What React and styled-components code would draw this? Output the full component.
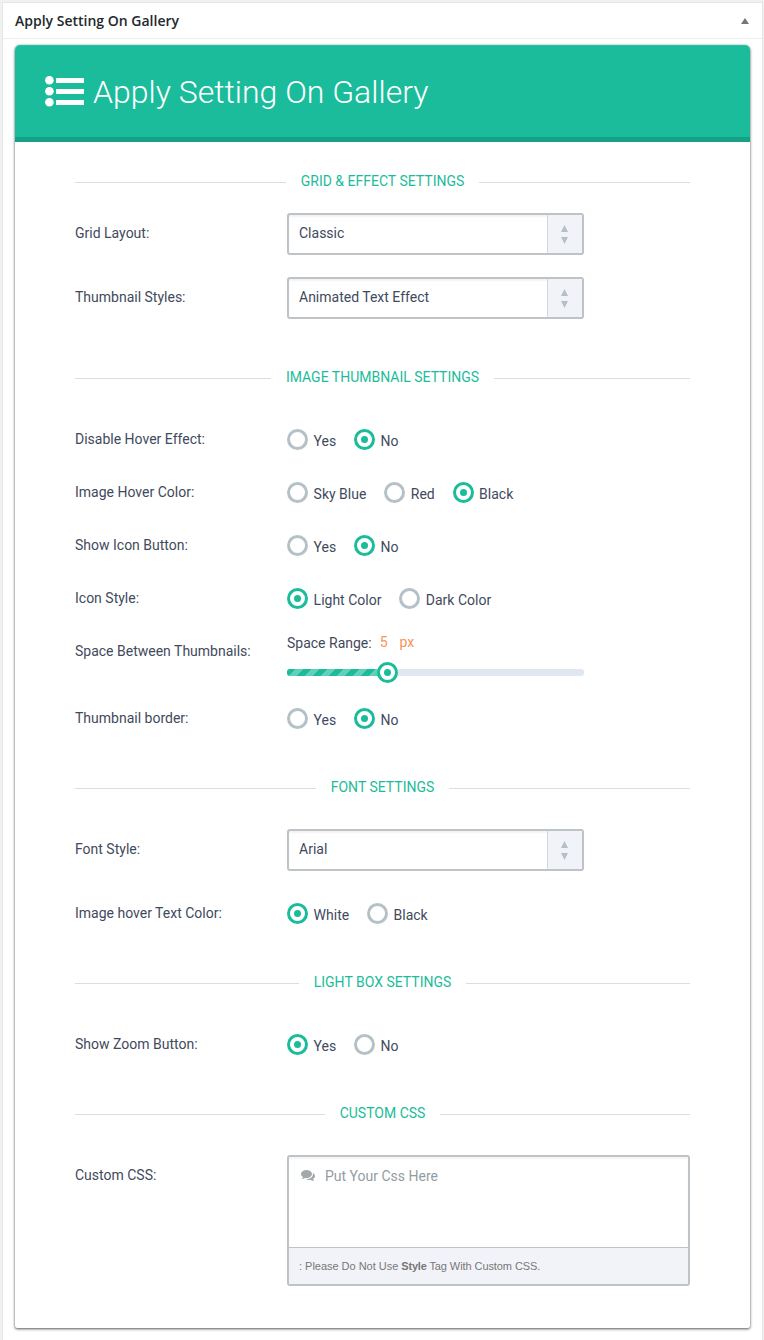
import React from "react";
import styled, { createGlobalStyle, css } from "styled-components";

const GlobalStyle = createGlobalStyle`
  *, *::before, *::after { box-sizing: border-box; }
  html, body { margin: 0; background: #f1f1f1; }
  body { font: 14px/20px Roboto, "Liberation Sans", sans-serif; color: #3f4a5c; height: 1340px; overflow: hidden; }
  input, textarea, button { font: inherit; }
`;

const MetaBox = styled.section`
  width: 761px;
  height: 1345px;
  margin: 2px 0 0 2px;
  background: #fff;
  border: 1px solid #e5e5e5;
`;

const MetaHeader = styled.header`
  height: 36px;
  display: flex;
  align-items: center;
  justify-content: space-between;
  padding: 0 13.5px 0 12px;
  border-bottom: 1px solid #eee;
`;

const MetaTitle = styled.h2`
  margin: 0;
  font: 600 14px/20px "Open Sans", "Noto Sans", sans-serif;
  color: #23282d;
`;

const Card = styled.div`
  margin: 6px 12px 0;
  width: 735px;
  border-radius: 5px 5px 2px 2px;
  background: #fff;
  box-shadow: 0 1px 3px rgba(0, 0, 0, 0.65), 0 0 1px rgba(0, 0, 0, 0.35);
`;

const Banner = styled.div`
  height: 97px;
  display: flex;
  align-items: center;
  gap: 9px;
  padding: 0 30px;
  color: #fff;
  background: #1bbc9b;
  border-top: 1px solid #1dc8a5;
  border-bottom: 5px solid #16a085;
  border-radius: 5px 5px 0 0;
`;

const BannerTitle = styled.h1`
  margin: 0;
  font-size: 32px;
  line-height: 40px;
  font-weight: 300;
`;

const Form = styled.form`
  padding: 30px 60px 42px;
`;

const Section = styled.fieldset`
  margin: 0;
  padding: 0;
  border: 0;
  min-width: 0;
  & + & { margin-top: 49px; }
`;

const SectionTitle = styled.h3`
  margin: 0 0 ${(p) => p.$space}px;
  height: 20px;
  display: flex;
  align-items: center;
  gap: 14.5px;
  font-size: 14px;
  line-height: 18px;
  font-weight: 400;
  text-transform: uppercase;
  white-space: nowrap;
  color: #1bbc9b;
  span { padding-bottom: 2px; }
  &::before, &::after {
    content: "";
    flex: 1;
    height: 1px;
    margin-top: 1px;
    background: #d9dde5;
  }
`;

const Rows = styled.div`
  display: flex;
  flex-direction: column;
  gap: ${(p) => p.$gap || 32}px;
`;

const Row = styled.div`
  display: grid;
  grid-template-columns: 212px 1fr;
  min-height: 21px;
`;

const RowLabel = styled.div`
  padding-top: ${(p) => (p.$tall ? 10 : 0)}px;
  height: 20px;
  white-space: nowrap;
`;

const SelectBox = styled.div`
  width: 297px;
  height: 42px;
  display: flex;
  border: 2px solid #bdc3c7;
  border-radius: 3px;
  box-shadow: inset 0 2px 2px #f3f3f3;
`;

const SelectValue = styled.div`
  flex: 1;
  padding: 8px 10px;
`;

const SelectArrows = styled.div`
  width: 35px;
  display: flex;
  flex-direction: column;
  align-items: center;
  padding: 10px 2px 0 0;
  gap: 5px;
  background: #f2f3f9;
  border-left: 1px solid #d3d6e2;
  color: #b4bfc8;
  svg { display: block; }
`;

const RadioGroup = styled.div`
  display: flex;
  height: 21px;
  gap: 17.8px;
`;

const RadioLabel = styled.label`
  display: flex;
  gap: 5.6px;
  white-space: nowrap;
  span { padding-top: 2px; height: 22px; }
`;

const ring = css`
  width: 21px;
  height: 21px;
  flex: none;
  display: grid;
  place-items: center;
  border: 3px solid ${(p) => (p.$on ? "#1bbc9b" : "#b5c1c7")};
  border-radius: 50%;
  background: #fff;
  &::after {
    content: "";
    width: 7px;
    height: 7px;
    border-radius: 50%;
    background: ${(p) => (p.$on ? "#1bbc9b" : "transparent")};
  }
`;

const RadioRing = styled.i`
  ${ring}
`;

const RangeField = styled.div`
  width: 297px;
  height: 43px;
  margin-top: -8px;
  display: flex;
  flex-direction: column;
  justify-content: space-between;
`;

const RangeCaption = styled.div`
  display: flex;
  height: 20px;
`;

const RangeValue = styled.span`
  margin-left: ${(p) => p.$offset}px;
  margin-top: -1px;
  color: #f6935c;
`;

const RangeTrack = styled.div`
  height: 7px;
  display: flex;
  align-items: center;
  border-radius: 3px;
  background: #e1e7f1;
`;

const RangeFill = styled.div`
  height: 7px;
  border-radius: 3px 0 0 3px;
  background-color: #1bbc9b;
  background-image: linear-gradient(
    -45deg,
    rgba(255, 255, 255, 0.3) 25%,
    transparent 25%,
    transparent 50%,
    rgba(255, 255, 255, 0.3) 50%,
    rgba(255, 255, 255, 0.3) 75%,
    transparent 75%
  );
  background-size: 16px 16px;
`;

const RangeHandle = styled.i`
  ${ring}
  margin-left: -11px;
`;

const CssField = styled.div`
  height: 131px;
  display: flex;
  flex-direction: column;
  border: 2px solid #bdc3c7;
  border-radius: 3px;
  overflow: hidden;
`;

const CssInput = styled.div`
  flex: 1;
  display: flex;
  align-items: flex-start;
  gap: 10px;
  padding: 9px 12px;
  color: #929da3;
  box-shadow: inset 0 2px 2px #f5f5f5;
  svg { margin-top: 2px; color: #a3a8aa; }
`;

const CssHint = styled.div`
  height: 37px;
  padding: 0 10px;
  border-top: 1px solid #bdc3c7;
  background: #f2f3f9;
  color: #777;
  font: 11px/36px "Liberation Sans", Arial, sans-serif;
  letter-spacing: -0.02px;
  b { letter-spacing: -0.2px; }
`;

const HintEnd = styled.span`
  letter-spacing: -0.08px;
`;

const ListIcon = () => (
  <svg width="39" height="31" viewBox="0 0 39 31" fill="currentColor" aria-hidden="true">
    {[4.5, 15.5, 26.5].map((y) => (
      <g key={y}>
        <circle cx="4.4" cy={y - 0.3} r="4.3" />
        <rect x="11" y={y - 2.5} width="28" height="5" rx="0.5" />
      </g>
    ))}
  </svg>
);

const CommentsIcon = () => (
  <svg width="14" height="14" viewBox="0 0 1792 1792" fill="currentColor" aria-hidden="true">
    <path d="M1408 768q0 139-94 257t-256.5 186.5-353.5 68.5q-86 0-176-16-124 88-278 128-36 9-86 16h-3q-11 0-20.5-8t-11.5-21q-1-3-1-6.5t.5-6.5 2-6l2.5-5 3.5-5.5 4-5 4.5-5 4-4.5q5-6 23-25t26-29.5 22.5-29 25-38.5 20.5-44q-124-72-195-177t-71-224q0-139 94-257t256.5-186.5 353.5-68.5 353.5 68.5 256.5 186.5 94 257zm384 256q0 120-71 224.5t-195 176.5q10 24 20.5 44t25 38.5 22.5 29 26 29.5 23 25q1 1 4 4.5t4.5 5 4 5 3.5 5.5l2.5 5 2 6 .5 6.5-1 6.5q-3 14-13 22t-22 7q-50-7-86-16-154-40-278-128-90 16-176 16-271 0-472-132 58 4 88 4 161 0 309-45t264-129q125-92 192-212t67-254q0-77-23-152 129 71 204 178t75 230z" />
  </svg>
);

const Triangle = ({ down, width = 7, height = 7 }) => (
  <svg width={width} height={height} viewBox="0 0 8 8" preserveAspectRatio="none" fill="currentColor" aria-hidden="true">
    <path d={down ? "M0 0H8L4 8Z" : "M0 8H8L4 0Z"} />
  </svg>
);

const ToggleButton = styled.button`
  border: 0;
  padding: 0;
  background: none;
  color: #72777c;
  display: flex;
`;

function Select({ label, value }) {
  return (
    <Row>
      <RowLabel $tall>{label}</RowLabel>
      <SelectBox>
        <SelectValue>{value}</SelectValue>
        <SelectArrows>
          <Triangle />
          <Triangle down />
        </SelectArrows>
      </SelectBox>
    </Row>
  );
}

function Radios({ label, options, value }) {
  return (
    <Row>
      <RowLabel>{label}</RowLabel>
      <RadioGroup>
        {options.map((o) => (
          <RadioLabel key={o}>
            <RadioRing $on={o === value} />
            <span>{o}</span>
          </RadioLabel>
        ))}
      </RadioGroup>
    </Row>
  );
}

function Range({ label, value, max }) {
  return (
    <Row>
      <RowLabel>{label}</RowLabel>
      <RangeField>
        <RangeCaption>
          Space Range:
          <RangeValue $offset={8}>{value}</RangeValue>
          <RangeValue $offset={12}>px</RangeValue>
        </RangeCaption>
        <RangeTrack>
          <RangeFill style={{ width: `${(value / max) * 100}%` }} />
          <RangeHandle $on />
        </RangeTrack>
      </RangeField>
    </Row>
  );
}

const Heading = ({ children, space }) => (
  <SectionTitle $space={space}>
    <span>{children}</span>
  </SectionTitle>
);

const yesNo = ["Yes", "No"];

export default function App() {
  return (
    <>
      <GlobalStyle />
      <MetaBox>
        <MetaHeader>
          <MetaTitle>Apply Setting On Gallery</MetaTitle>
          <ToggleButton type="button" aria-label="Toggle panel">
            <Triangle width={8} height={6} />
          </ToggleButton>
        </MetaHeader>
        <Card>
          <Banner>
            <ListIcon />
            <BannerTitle>Apply Setting On Gallery</BannerTitle>
          </Banner>
          <Form>
            <Section>
              <Heading space={21}>Grid &amp; Effect Settings</Heading>
              <Rows $gap={22}>
                <Select label="Grid Layout:" value="Classic" />
                <Select label="Thumbnail Styles:" value="Animated Text Effect" />
              </Rows>
            </Section>
            <Section>
              <Heading space={41}>Image Thumbnail Settings</Heading>
              <Rows>
                <Radios label="Disable Hover Effect:" options={yesNo} value="No" />
                <Radios label="Image Hover Color:" options={["Sky Blue", "Red", "Black"]} value="Black" />
                <Radios label="Show Icon Button:" options={yesNo} value="No" />
                <Radios label="Icon Style:" options={["Light Color", "Dark Color"]} value="Light Color" />
                <Range label="Space Between Thumbnails:" value={5} max={14.7} />
                <Radios label="Thumbnail border:" options={yesNo} value="No" />
              </Rows>
            </Section>
            <Section>
              <Heading space={31}>Font Settings</Heading>
              <Rows>
                <Select label="Font Style:" value="Arial" />
                <Radios label="Image hover Text Color:" options={["White", "Black"]} value="White" />
              </Rows>
            </Section>
            <Section>
              <Heading space={41}>Light Box Settings</Heading>
              <Rows>
                <Radios label="Show Zoom Button:" options={yesNo} value="Yes" />
              </Rows>
            </Section>
            <Section>
              <Heading space={31}>Custom CSS</Heading>
              <Row>
                <RowLabel $tall>Custom CSS:</RowLabel>
                <CssField>
                  <CssInput>
                    <CommentsIcon />
                    <span>Put Your Css Here</span>
                  </CssInput>
                  <CssHint>
                    : Please Do Not Use <b>Style</b>
                    <HintEnd> Tag With Custom CSS.</HintEnd>
                  </CssHint>
                </CssField>
              </Row>
            </Section>
          </Form>
        </Card>
      </MetaBox>
    </>
  );
}
